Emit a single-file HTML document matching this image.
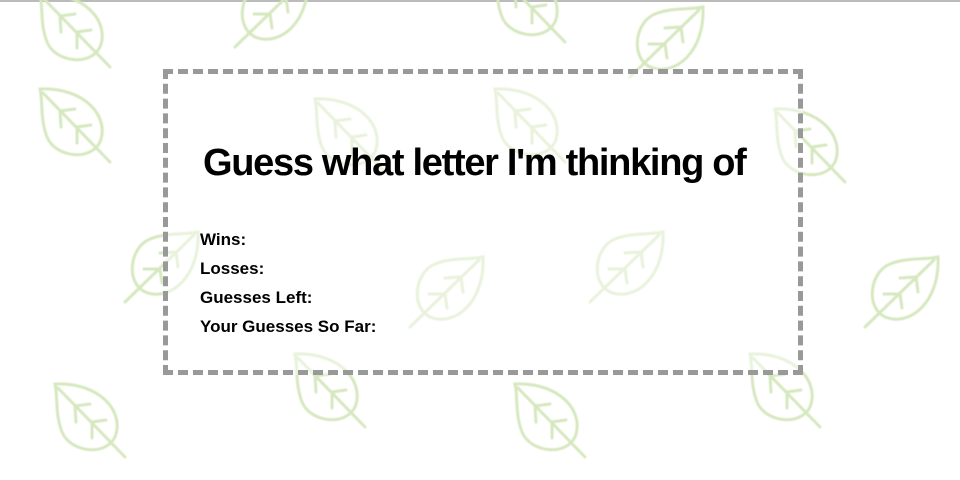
<!DOCTYPE html>
<html><head><style>
html,body{margin:0;padding:0;width:960px;height:480px;overflow:hidden;background:#fff;}
body{border-top:2px solid #bbb;box-sizing:border-box;position:relative;font-family:"Liberation Sans",sans-serif;}
.leaf{position:absolute;width:90px;height:90px;filter:blur(0.6px);}
.box{position:absolute;left:163px;top:67px;width:640px;height:306px;box-sizing:border-box;border:5px dashed #999;background:rgba(255,255,255,0.45);}
h1{position:absolute;left:35px;top:68px;margin:0;font-size:38px;font-weight:bold;letter-spacing:-1.3px;color:#000;white-space:nowrap;}
.s{position:absolute;left:32px;top:151px;font-size:17px;font-weight:bold;line-height:29px;color:#000;letter-spacing:0px;}
</style></head><body>
<svg width="0" height="0" style="position:absolute"><defs>
<g id="L" fill="none" stroke="#d6e8bf" stroke-width="3" stroke-linecap="round">
<path d="M15 12 C60 10 85 40 75 65 C65 85 30 80 22 60 C15 42 18 25 15 12 Z"/>
<path d="M18 16 L85 85"/>
<path d="M35 34 L36 50 M35 34 L50 32 M52 50 L52 66 M52 50 L66 48"/>
</g></defs></svg>
<svg class="leaf" style="left:25px;top:-20px" viewBox="0 0 90 90"><use href="#L"/></svg>
<svg class="leaf" style="left:230px;top:-40px" viewBox="0 0 90 90"><use href="#L" transform="rotate(90 45 45)"/></svg>
<svg class="leaf" style="left:480px;top:-45px" viewBox="0 0 90 90"><use href="#L"/></svg>
<svg class="leaf" style="left:625px;top:-10px" viewBox="0 0 90 90"><use href="#L" transform="rotate(90 45 45)"/></svg>
<svg class="leaf" style="left:25px;top:75px" viewBox="0 0 90 90"><use href="#L"/></svg>
<svg class="leaf" style="left:300px;top:85px" viewBox="0 0 90 90"><use href="#L"/></svg>
<svg class="leaf" style="left:480px;top:75px" viewBox="0 0 90 90"><use href="#L"/></svg>
<svg class="leaf" style="left:760px;top:95px" viewBox="0 0 90 90"><use href="#L"/></svg>
<svg class="leaf" style="left:120px;top:215px" viewBox="0 0 90 90"><use href="#L" transform="rotate(90 45 45)"/></svg>
<svg class="leaf" style="left:405px;top:240px" viewBox="0 0 90 90"><use href="#L" transform="rotate(90 45 45)"/></svg>
<svg class="leaf" style="left:585px;top:215px" viewBox="0 0 90 90"><use href="#L" transform="rotate(90 45 45)"/></svg>
<svg class="leaf" style="left:860px;top:240px" viewBox="0 0 90 90"><use href="#L" transform="rotate(90 45 45)"/></svg>
<svg class="leaf" style="left:40px;top:370px" viewBox="0 0 90 90"><use href="#L"/></svg>
<svg class="leaf" style="left:280px;top:340px" viewBox="0 0 90 90"><use href="#L"/></svg>
<svg class="leaf" style="left:500px;top:370px" viewBox="0 0 90 90"><use href="#L"/></svg>
<svg class="leaf" style="left:735px;top:340px" viewBox="0 0 90 90"><use href="#L"/></svg>
<div class="box">
<h1>Guess what letter I'm thinking of</h1>
<div class="s">Wins:<br>Losses:<br>Guesses Left:<br>Your Guesses So Far:</div>
</div>
</body></html>
